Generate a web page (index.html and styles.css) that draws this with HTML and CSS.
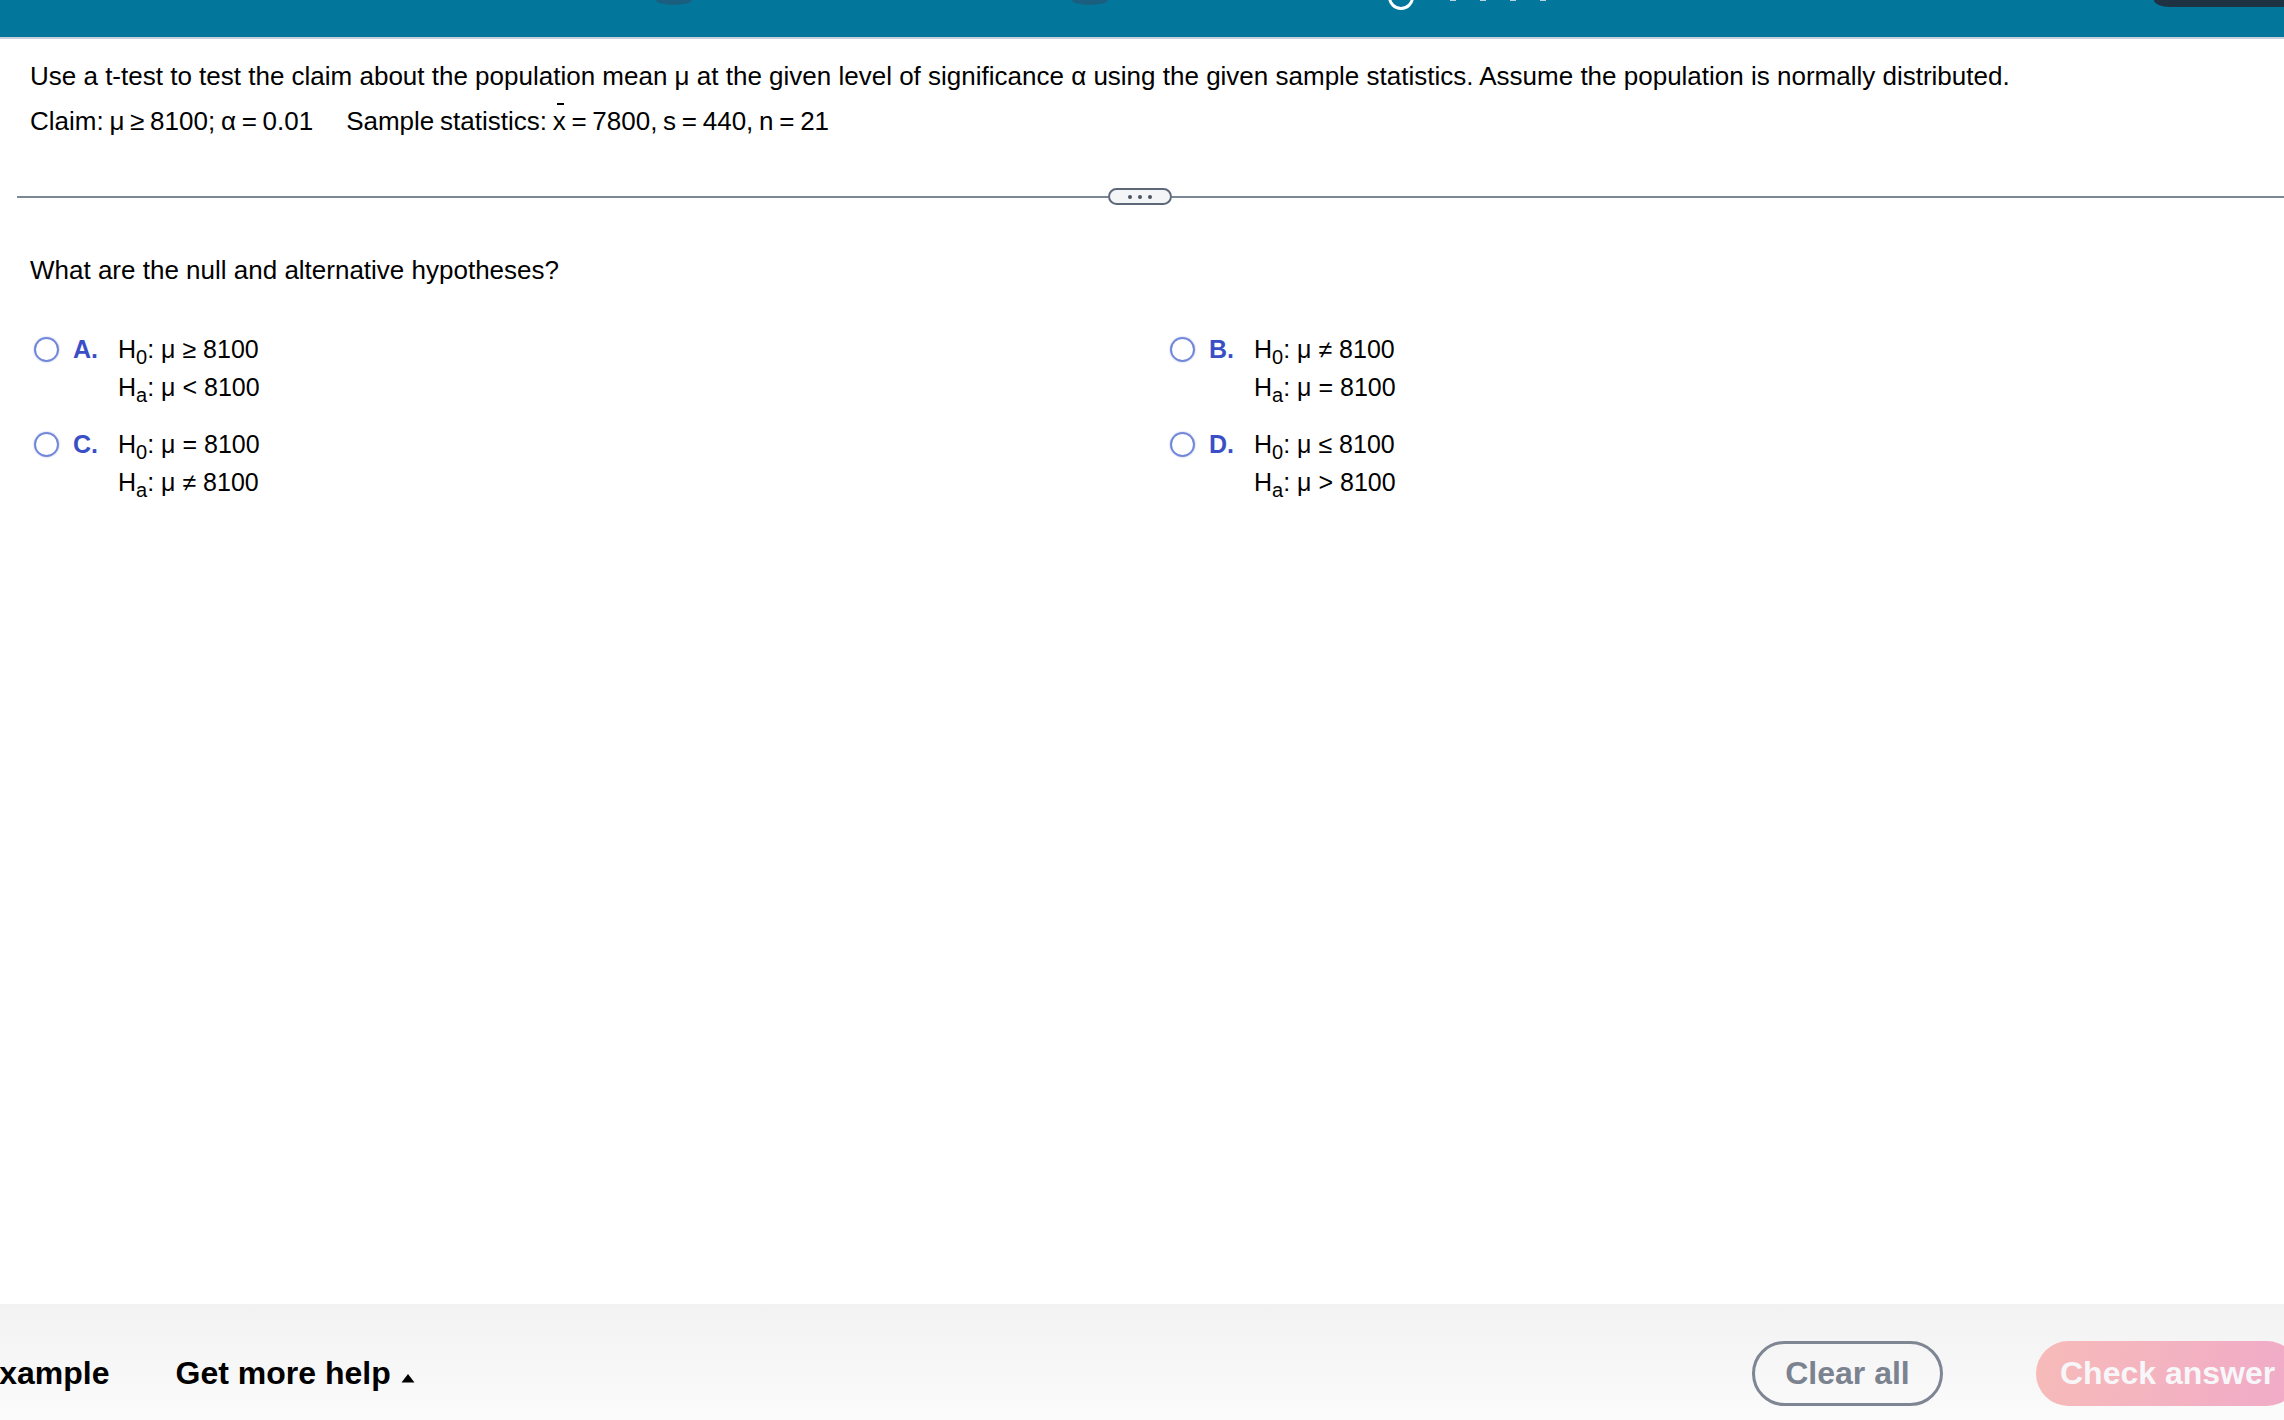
FILE: index.html
```html
<!DOCTYPE html>
<html lang="en">
<head>
<meta charset="utf-8">
<title>Hypothesis test</title>
<link rel="stylesheet" href="styles.css">
</head>
<body>
<header class="topbar">
  <div class="bump bump-1"></div>
  <div class="bump bump-2"></div>
  <div class="ring"></div>
  <div class="marks"><span></span><span></span><span></span><span></span></div>
  <div class="tab"></div>
</header>

<main class="content">
  <p class="stem">Use a t-test to test the claim about the population mean μ at the given level of significance α using the given sample statistics. Assume the population is normally distributed.</p>
  <p class="stem stem-2"><span class="math">Claim: μ ≥ 8100; α = 0.01</span><span class="gap"></span><span class="math">Sample statistics: <span class="xbar">x</span> = 7800, s = 440, n = 21</span></p>

  <div class="divider">
    <div class="rule rule-left"></div>
    <div class="pill"><i></i><i></i><i></i></div>
    <div class="rule rule-right"></div>
  </div>

  <p class="question">What are the null and alternative hypotheses?</p>

  <div class="options">
    <div class="option">
      <span class="radio"></span>
      <span class="letter">A.</span>
      <div class="hyp">
        <div class="line">H<sub>0</sub>: μ ≥ 8100</div>
        <div class="line">H<sub>a</sub>: μ &lt; 8100</div>
      </div>
    </div>
    <div class="option">
      <span class="radio"></span>
      <span class="letter">B.</span>
      <div class="hyp">
        <div class="line">H<sub>0</sub>: μ ≠ 8100</div>
        <div class="line">H<sub>a</sub>: μ = 8100</div>
      </div>
    </div>
    <div class="option">
      <span class="radio"></span>
      <span class="letter">C.</span>
      <div class="hyp">
        <div class="line">H<sub>0</sub>: μ = 8100</div>
        <div class="line">H<sub>a</sub>: μ ≠ 8100</div>
      </div>
    </div>
    <div class="option">
      <span class="radio"></span>
      <span class="letter">D.</span>
      <div class="hyp">
        <div class="line">H<sub>0</sub>: μ ≤ 8100</div>
        <div class="line">H<sub>a</sub>: μ &gt; 8100</div>
      </div>
    </div>
  </div>
</main>

<footer class="footer">
  <span class="foot-link example">View an example</span>
  <span class="foot-link help">Get more help
    <svg class="caret" width="14" height="10" viewBox="0 0 14 10"><path d="M7 1 L13.5 9.5 L0.5 9.5 Z" fill="#000"/></svg>
  </span>
  <button class="btn btn-clear">Clear all</button>
  <button class="btn btn-check">Check answer</button>
</footer>
</body>
</html>
```

FILE: styles.css
```css
html, body {
  margin: 0;
  padding: 0;
}

body {
  width: 2284px;
  height: 1420px;
  overflow: hidden;
  display: flex;
  flex-direction: column;
  background: #ffffff;
  color: #000000;
  font-family: "Liberation Sans", Arial, Helvetica, sans-serif;
}

/* ---------- top bar ---------- */
.topbar {
  height: 37px;
  flex: 0 0 auto;
  background: #02779b;
  border-bottom: 2px solid #c8d0db;
  display: flex;
  align-items: flex-start;
  overflow: hidden;
}

.bump {
  width: 36px;
  height: 5px;
  background: #1b5f80;
  border-radius: 0 0 18px 18px / 0 0 5px 5px;
}

.bump-1 { margin-left: 656px; }
.bump-2 { margin-left: 380px; }

.ring {
  margin-left: 280px;
  margin-top: -16px;
  width: 20px;
  height: 20px;
  border: 3px solid #ffffff;
  border-radius: 50%;
  flex: 0 0 auto;
}

.marks {
  margin-left: 36px;
  display: flex;
  gap: 24px;
}

.marks span {
  width: 6px;
  height: 1px;
  background: rgba(255, 255, 255, 0.7);
}

.tab {
  margin-left: auto;
  width: 130px;
  height: 7px;
  background: #1e3244;
  border-bottom-left-radius: 16px 7px;
}

/* ---------- content ---------- */
.content {
  padding: 22px 0 0 30px;
}

.stem {
  margin: 0;
  font-size: 26px;
  line-height: 30px;
}

.stem-2 {
  margin-top: 15px;
}

.math {
  word-spacing: -1.5px;
}

.gap {
  display: inline-block;
  width: 33px;
}

.xbar {
  position: relative;
  display: inline-block;
}

.xbar::after {
  content: "";
  position: absolute;
  left: 4px;
  top: -3px;
  width: 7px;
  height: 2px;
  background: #000;
}

.divider {
  margin: 52px 0 0 -13px;
  display: flex;
  align-items: center;
  height: 17px;
}

.rule {
  height: 2px;
  background: #7b8794;
}

.rule-left { width: 1091px; }
.rule-right { flex: 1 1 auto; }

.pill {
  box-sizing: border-box;
  width: 64px;
  height: 17px;
  border: 2px solid #5d6978;
  border-radius: 9px;
  background: #f4f5f7;
  display: flex;
  align-items: center;
  justify-content: center;
  gap: 6px;
}

.pill i {
  width: 4px;
  height: 4px;
  border-radius: 50%;
  background: #4a5563;
}

.question {
  margin: 50px 0 0 0;
  font-size: 26px;
  line-height: 30px;
}

.options {
  margin-top: 45px;
  margin-left: 4px;
  display: grid;
  grid-template-columns: 1136px 1136px;
  row-gap: 19px;
}

.option {
  display: flex;
  align-items: flex-start;
}

.radio {
  box-sizing: border-box;
  width: 25px;
  height: 25px;
  margin-top: 7px;
  border: 2.5px solid #7287d9;
  border-radius: 50%;
  box-shadow: 0 0 1.5px rgba(114, 135, 217, 0.8);
  flex: 0 0 auto;
}

.letter {
  margin-left: 14px;
  width: 45px;
  font-size: 25px;
  line-height: 38px;
  font-weight: bold;
  color: #3a4fc6;
}

.hyp .line {
  font-size: 25px;
  line-height: 38px;
}

.hyp sub {
  font-size: 20px;
  line-height: 0;
  vertical-align: -6px;
}

/* ---------- footer ---------- */
.footer {
  margin-top: auto;
  height: 116px;
  box-sizing: border-box;
  padding-top: 23px;
  flex: 0 0 auto;
  display: flex;
  align-items: center;
  background: linear-gradient(#f2f2f2, #fbfbfb);
}

.foot-link {
  font-size: 32px;
  font-weight: bold;
  color: #000;
  white-space: nowrap;
}

.example {
  margin-left: -146px;
}

.help {
  margin-left: 66px;
  display: flex;
  align-items: center;
  gap: 10px;
}

.caret {
  margin-top: 8px;
}

.btn {
  box-sizing: border-box;
  height: 65px;
  border-radius: 33px;
  font-family: "Liberation Sans", Arial, Helvetica, sans-serif;
  font-size: 32px;
  font-weight: bold;
  white-space: nowrap;
  cursor: pointer;
}

.btn-clear {
  margin-left: auto;
  width: 191px;
  padding: 0;
  border: 3px solid #7e8593;
  background: transparent;
  color: #7b8290;
}

.btn-check {
  margin-left: 93px;
  margin-right: -15px;
  width: 263px;
  padding: 0 0 0 24px;
  text-align: left;
  border: none;
  background: linear-gradient(100deg, #f7bbb9, #f0aac8);
  color: #f7f7fa;
}
```
